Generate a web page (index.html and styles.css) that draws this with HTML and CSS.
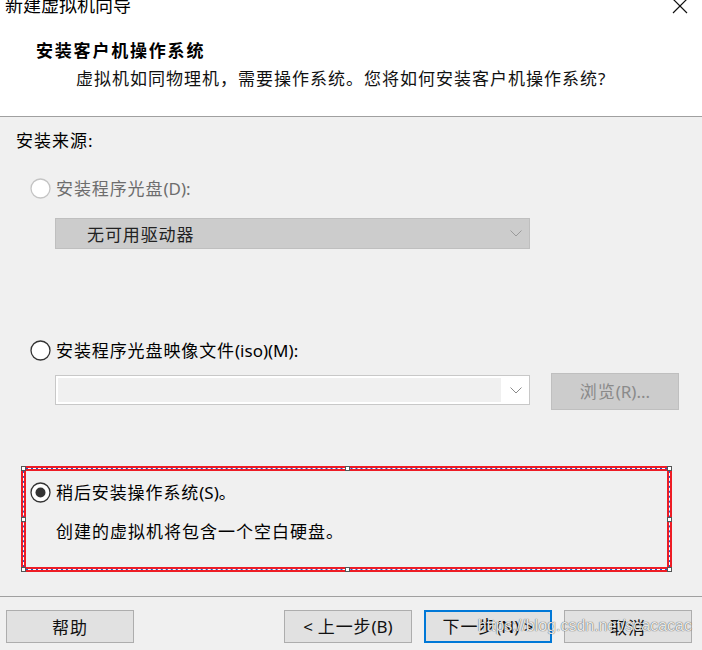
FILE: index.html
```html
<!DOCTYPE html>
<html lang="zh-CN">
<head>
<meta charset="utf-8">
<title>新建虚拟机向导</title>
<link rel="stylesheet" href="styles.css">
</head>
<body>
<div class="dialog">
  <header class="header">
    <div class="titlebar">
      <span class="wintitle">新建虚拟机向导</span>
      <svg class="close" width="16" height="15" viewBox="0 0 16 15"><path d="M1 0 L15 14 M15 0 L1 14" stroke="#111" stroke-width="1.2" fill="none"/></svg>
    </div>
    <h1 class="heading">安装客户机操作系统</h1>
    <p class="subheading">虚拟机如同物理机，需要操作系统。您将如何安装客户机操作系统<span class="latin">?</span></p>
  </header>

  <main class="content">
    <div class="section-label">安装来源<span class="latin">:</span></div>

    <div class="option option-disc is-disabled">
      <svg class="radio" width="21" height="21" viewBox="0 0 21 21"><circle cx="10.5" cy="10.5" r="9.5" fill="#fff" stroke="#c4c4c4" stroke-width="1.3"/></svg>
      <span class="option-text">安装程序光盘<span class="latin">(D):</span></span>
    </div>

    <div class="select select-disabled">
      <span class="select-text">无可用驱动器</span>
      <svg class="chevron" width="12" height="7" viewBox="0 0 12 7"><path d="M0.5 0.5 L6 6 L11.5 0.5" stroke="#9a9a9a" stroke-width="1" fill="none"/></svg>
    </div>

    <div class="option option-iso">
      <svg class="radio" width="21" height="21" viewBox="0 0 21 21"><circle cx="10.5" cy="10.5" r="9.5" fill="#fff" stroke="#333" stroke-width="1.3"/></svg>
      <span class="option-text">安装程序光盘映像文件<span class="latin">(iso)(M):</span></span>
    </div>

    <div class="iso-row">
      <div class="combo">
        <div class="combo-field"></div>
        <svg class="chevron" width="12" height="7" viewBox="0 0 12 7"><path d="M0.5 0.5 L6 6 L11.5 0.5" stroke="#8a8a8a" stroke-width="1" fill="none"/></svg>
      </div>
      <button class="btn btn-browse" disabled>浏览<span class="latin">(R)...</span></button>
    </div>

    <div class="highlight">
      <span class="handle h-tl"></span>
      <span class="handle h-tm"></span>
      <span class="handle h-tr"></span>
      <span class="handle h-ml"></span>
      <span class="handle h-mr"></span>
      <span class="handle h-bl"></span>
      <span class="handle h-bm"></span>
      <span class="handle h-br"></span>
      <div class="option option-later">
        <svg class="radio" width="21" height="21" viewBox="0 0 21 21"><circle cx="10.5" cy="10.5" r="9.5" fill="#fff" stroke="#333" stroke-width="1.3"/><circle cx="10.5" cy="10.5" r="5" fill="#333"/></svg>
        <span class="option-text">稍后安装操作系统<span class="latin">(S)</span>。</span>
      </div>
      <p class="desc">创建的虚拟机将包含一个空白硬盘。</p>
    </div>
  </main>

  <footer class="footer">
    <button class="btn btn-help">帮助</button>
    <button class="btn"><span class="latin">&lt;</span> 上一步<span class="latin">(B)</span></button>
    <button class="btn btn-primary">下一步<span class="latin">(N) &gt;</span></button>
    <button class="btn">取消</button>
    <span class="watermark">https://blog.csdn.net/scacacac</span>
  </footer>
</div>
</body>
</html>
```

FILE: styles.css
```css
* {
  box-sizing: border-box;
}

html, body {
  margin: 0;
  padding: 0;
}

body {
  background: #f0f0f0;
  font-family: "Noto Sans CJK SC", "Noto Sans", sans-serif;
  font-size: 18px;
  line-height: 18px;
  color: #000;
}

.latin {
  font-family: "Noto Sans", "Open Sans", sans-serif;
  letter-spacing: 0;
}

.dialog {
  width: 702px;
  height: 650px;
  display: flex;
  flex-direction: column;
  overflow: hidden;
  position: relative;
}

/* ---------- header ---------- */
.header {
  flex: none;
  height: 117px;
  background: #fff;
  border-bottom: 1px solid #a0a0a0;
  overflow: hidden;
}

.titlebar {
  display: flex;
  justify-content: space-between;
  align-items: flex-start;
  height: 14px;
  padding-left: 5px;
  padding-right: 14px;
}

.wintitle {
  display: block;
  margin-top: -5px;
  font-size: 18px;
  line-height: 18px;
  color: #000;
}

.close {
  display: block;
  margin-top: -1px;
}

.heading {
  margin: 27px 0 0 36px;
  font-size: 17px;
  line-height: 18px;
  font-weight: 700;
  letter-spacing: 1.8px;
}

.subheading {
  margin: 10px 0 0 76px;
  font-size: 17px;
  line-height: 18px;
  letter-spacing: 1px;
  color: #111;
}

/* ---------- content ---------- */
.content {
  flex: none;
  height: 479px;
  display: flex;
  flex-direction: column;
  align-items: flex-start;
}

.section-label {
  margin: 14px 0 0 16px;
  font-size: 17px;
  letter-spacing: 1px;
}

.option {
  display: flex;
  align-items: center;
  gap: 5px;
  height: 21px;
  font-size: 17px;
  letter-spacing: 0.9px;
}

.radio {
  display: block;
  flex: none;
}

.option-disc {
  margin: 28px 0 0 30px;
}

.is-disabled .option-text {
  color: #6d6d6d;
}

.select {
  display: flex;
  align-items: center;
  justify-content: space-between;
  width: 475px;
  height: 31px;
  margin: 19px 0 0 55px;
  padding: 0 7px 0 31px;
  font-size: 17px;
  letter-spacing: 0.9px;
}

.select-disabled {
  background: #cccccc;
  border: 1px solid #bfbfbf;
  color: #222;
}

.option-iso {
  margin: 91px 0 0 30px;
}

.iso-row {
  display: flex;
  align-items: flex-start;
  gap: 21px;
  margin: 12px 0 0 55px;
  height: 37px;
}

.combo {
  display: flex;
  align-items: center;
  width: 475px;
  height: 30px;
  margin-top: 2px;
  background: #fff;
  border: 1px solid #c8c8c8;
  padding: 2px 7px 2px 2px;
}

.combo-field {
  width: 443px;
  height: 100%;
  background: #f0f0f0;
}

.combo .chevron {
  margin-left: auto;
}

.btn {
  width: 128px;
  height: 33px;
  padding: 0;
  background: #e1e1e1;
  border: 1px solid #adadad;
  font-family: inherit;
  font-size: 17px;
  line-height: 18px;
  letter-spacing: 0.9px;
  color: #111;
}

.btn-browse {
  height: 37px;
  background: #cccccc;
  border-color: #bfbfbf;
  color: #8a8a8a;
}

/* ---------- highlighted option ---------- */
.highlight {
  position: relative;
  width: 651px;
  height: 106px;
  margin: 56px 0 0 21px;
  border: 5px solid #ee1c25;
}

.highlight::before,
.highlight::after {
  content: "";
  position: absolute;
  inset: -3px;
}

.highlight::before {
  border: 1px solid #2257c9;
}

.highlight::after {
  border: 1px dashed #ffffff;
}

.handle {
  position: absolute;
  z-index: 2;
  width: 5px;
  height: 5px;
  background: #fff;
  border: 1px solid #555;
}

.h-tl { top: -5px; left: -5px; }
.h-tm { top: -5px; left: 319px; }
.h-tr { top: -5px; right: -5px; }
.h-ml { top: 46px; left: -5px; }
.h-mr { top: 46px; right: -5px; }
.h-bl { bottom: -5px; left: -5px; }
.h-bm { bottom: -5px; left: 319px; }
.h-br { bottom: -5px; right: -5px; }

.option-later {
  margin: 11px 0 0 4px;
}

.desc {
  margin: 19px 0 0 30px;
  font-size: 17px;
  letter-spacing: 1px;
}

/* ---------- footer ---------- */
.footer {
  flex: 1;
  position: relative;
  display: flex;
  align-items: flex-start;
  gap: 12px;
  padding: 13px 10px 0 6px;
  border-top: 1px solid #a0a0a0;
}

.btn-help {
  margin-right: auto;
}

.btn-primary {
  border: 2px solid #0078d7;
}

.watermark {
  position: absolute;
  right: 10px;
  top: 20px;
  font-family: "Liberation Sans", Arial, sans-serif;
  font-size: 16px;
  line-height: 18px;
  color: rgba(255, 255, 255, 0.9);
  text-shadow: 0 0 1px rgba(0, 0, 0, 0.6), 0 0 1px rgba(0, 0, 0, 0.4);
  pointer-events: none;
}
```
